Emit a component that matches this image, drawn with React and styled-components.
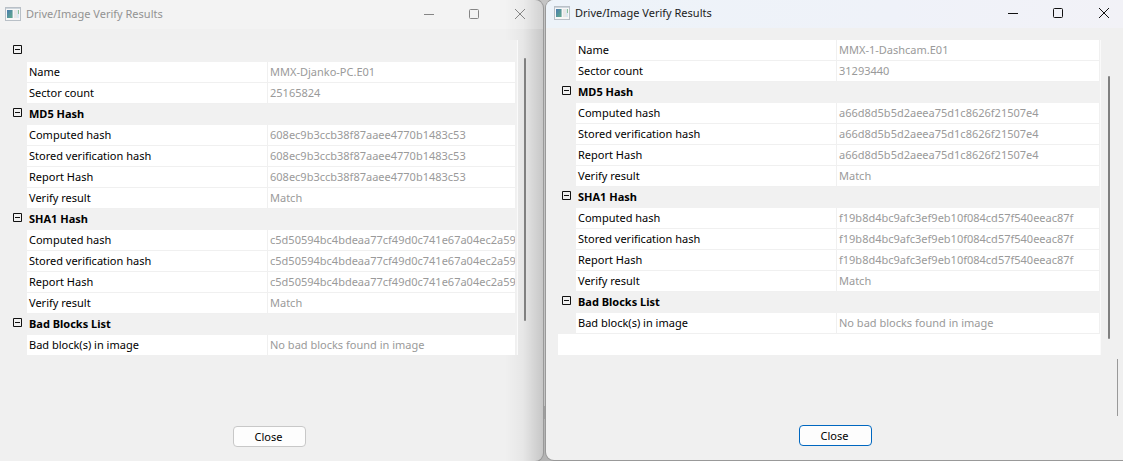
import React from 'react';
import styled, { createGlobalStyle } from 'styled-components';

const GlobalStyle = createGlobalStyle`
  * { box-sizing: border-box; }
  body {
    margin: 0;
    background: #b4b4b4;
    font-family: "Noto Sans", "Open Sans", sans-serif;
    font-size: 11px;
    overflow: hidden;
  }
`;

const Desktop = styled.main`
  display: grid;
  grid-template-columns: 543fr 577fr;
  gap: 3px;
  min-height: 100vh;
  background: linear-gradient(to bottom, #c4c4c4 0 406px, #a0a0a0 406px 419px, #b4b4b4 419px);
`;

const Dialog = styled.section`
  display: flex;
  flex-direction: column;
  min-width: 0;
  border-radius: ${p => (p.$active ? '8px 0 0 8px' : '0 8px 8px 0')};
  margin-bottom: ${p => (p.$active ? '1px' : '0')};
  background: ${p =>
    p.$active
      ? '#f0f0f0'
      : 'linear-gradient(to right, transparent calc(100% - 38px), #0000000a calc(100% - 20px), #0000002c) #f0f0f0'};
  box-shadow: 0 0 0 1px #999;
`;

const TitleBar = styled.header`
  display: flex;
  align-items: center;
  height: ${p => (p.$active ? '28px' : '29px')};
  padding: 0 ${p => (p.$active ? '13px' : '17px')} 2px ${p => (p.$active ? '8px' : '5px')};
  gap: 5px;
  border-radius: ${p => (p.$active ? '8px 0 0 0' : '0 8px 0 0')};
  background: ${p => (p.$active ? 'linear-gradient(to right, #edf3f9, #eff2f9 60%, #f2f2f7)' : '#ffffff33')};
  color: ${p => (p.$active ? '#1b1b1b' : '#929292')};
`;

const Title = styled.h1`
  flex: 1;
  margin: 0;
  font-size: 11px;
  line-height: 16px;
  font-weight: 400;
`;

const WindowControls = styled.div`
  display: flex;
  gap: 34px;
`;

const ControlButton = styled.button`
  display: flex;
  width: 12px;
  height: 12px;
  padding: 0;
  border: 0;
  background: none;
  color: ${p => (p.$active ? '#111' : '#858585')};
`;

const Content = styled.div`
  display: flex;
  align-items: flex-start;
  gap: ${p => (p.$active ? '7px' : '6px')};
  padding: ${p => (p.$active ? '12px 13px 0 12px' : '11px 17px 0 9px')};
`;

const Pane = styled.div`
  flex: 1;
  min-width: 0;
  height: 315px;
  overflow: hidden;
  background: #fff;
  border-right: 1px solid #fafafa;
`;

const Table = styled.table`
  width: 100%;
  table-layout: fixed;
  border-collapse: separate;
  border-spacing: 0;
  border-right: ${p => (p.$active ? '0' : '1px')} solid #f1f1f1;
  background: #f1f1f1;
  line-height: 16px;
`;

const GutterCol = styled.col`
  width: 18px;
`;

const NameCol = styled.col`
  width: ${p => (p.$active ? '261px' : '241px')};
`;

const Gutter = styled.td`
  padding: 0;
  background: #f0f0f0;
`;

const Cell = styled.td`
  height: 21px;
  padding: 0 2px;
  border: solid #f0f0f0;
  border-width: 0 1px 1px 0;
  background: #fff;
  color: ${p => (p.$value ? '#9a9a9a' : '#000')};
  white-space: nowrap;
  overflow: hidden;
`;

const GroupCell = styled.th`
  height: ${p => (p.$blank ? '22px' : '21px')};
  padding: 0 2px 1px;
  text-align: left;
  font-weight: 700;
  color: #000;
`;

const Toggle = styled.button`
  display: block;
  width: 9px;
  height: 9px;
  margin: 0 auto 4px 4px;
  padding: 0;
  border: 0;
  background: none;
`;

const Scrollbar = styled.div`
  width: 2px;
  height: 263px;
  margin-top: ${p => (p.$active ? '36px' : '18px')};
  border-radius: 1px;
  background: #808080;
`;

const Splitter = styled.div`
  align-self: flex-end;
  width: 1px;
  height: 57px;
  margin: 4px 5px 0 0;
  background: #999;
`;

const Footer = styled.footer`
  display: flex;
  justify-content: center;
  padding: ${p => (p.$active ? '9px 0 0 2px' : '71px 4px 0 0')};
`;

const CloseButton = styled.button`
  width: 73px;
  height: 21px;
  padding: 0 2px 0 0;
  border: 1px solid ${p => (p.$active ? '#0067c0' : '#c8c8c8')};
  border-radius: 4px;
  background: #fdfdfd;
  color: #000;
  font: 11px/16px "Noto Sans", "Open Sans", sans-serif;
`;

const WindowIcon = () => (
  <svg width="16" height="14" viewBox="0 0 16 14" aria-hidden="true">
    <defs>
      <linearGradient id="screen" x1="0" y1="0" x2="1" y2="1">
        <stop offset="0" stopColor="#4a7bb0" />
        <stop offset="1" stopColor="#5fab8b" />
      </linearGradient>
    </defs>
    <rect x="0.5" y="0.5" width="15" height="13" fill="#f7f7f7" stroke="#b9c0c7" />
    <path d="M1 1.5H15" stroke="#cdd5dc" />
    <rect x="2" y="3" width="5" height="8" fill="url(#screen)" />
    <rect x="7" y="3" width="1" height="8" fill="#9fbfc0" />
    <rect x="9" y="3" width="3" height="8" fill="#e8e8e8" />
    <rect x="12" y="3" width="2" height="8" fill="#dbe9f2" />
    <rect x="13" y="3" width="1" height="4" fill="#8cc09b" />
  </svg>
);

const controlPaths = {
  Minimize: 'M2 6.5H12',
  Maximize: 'M2.5 1.5H9.5Q10.5 1.5 10.5 2.5V9.5Q10.5 10.5 9.5 10.5H2.5Q1.5 10.5 1.5 9.5V2.5Q1.5 1.5 2.5 1.5Z',
  Close: 'M1 1L11 11M11 1L1 11',
};

const hashRows = hash => [
  ['Computed hash', hash],
  ['Stored verification hash', hash],
  ['Report Hash', hash],
  ['Verify result', 'Match'],
];

const buildGroups = ({ heading, name, sectors, md5, sha1 }) => [
  { heading, rows: [['Name', name], ['Sector count', sectors]] },
  { heading: 'MD5 Hash', rows: hashRows(md5) },
  { heading: 'SHA1 Hash', rows: hashRows(sha1) },
  { heading: 'Bad Blocks List', rows: [['Bad block(s) in image', 'No bad blocks found in image']] },
];

const images = [
  {
    heading: '',
    name: 'MMX-Djanko-PC.E01',
    sectors: '25165824',
    md5: '608ec9b3ccb38f87aaee4770b1483c53',
    sha1: 'c5d50594bc4bdeaa77cf49d0c741e67a04ec2a59',
  },
  {
    heading: null,
    name: 'MMX-1-Dashcam.E01',
    sectors: '31293440',
    md5: 'a66d8d5b5d2aeea75d1c8626f21507e4',
    sha1: 'f19b8d4bc9afc3ef9eb10f084cd57f540eeac87f',
    active: true,
  },
];

function Group({ heading, rows }) {
  return (
    <tbody>
      {heading !== null && (
        <tr>
          <Gutter>
            <Toggle aria-label={`Collapse ${heading || 'general'}`}>
              <svg width="9" height="9" viewBox="0 0 9 9" display="block">
                <path d="M0.5 0.5H8.5V8.5H0.5ZM2 4.5H7" fill="none" stroke="#111" />
              </svg>
            </Toggle>
          </Gutter>
          <GroupCell colSpan={2} $blank={!heading}>{heading}</GroupCell>
        </tr>
      )}
      {rows.map(([label, value]) => (
        <tr key={label}>
          <Gutter />
          <Cell>{label}</Cell>
          <Cell $value>{value}</Cell>
        </tr>
      ))}
    </tbody>
  );
}

function VerifyDialog({ image }) {
  const active = Boolean(image.active);
  return (
    <Dialog $active={active}>
      <TitleBar $active={active}>
        <WindowIcon />
        <Title>Drive/Image Verify Results</Title>
        <WindowControls>
          {Object.entries(controlPaths).map(([label, d]) => (
            <ControlButton key={label} aria-label={label} $active={active}>
              <svg width="12" height="12" viewBox="0 0 12 12">
                <path d={d} fill="none" stroke="currentColor" />
              </svg>
            </ControlButton>
          ))}
        </WindowControls>
      </TitleBar>
      <Content $active={active}>
        <Pane>
          <Table $active={active}>
            <colgroup>
              <GutterCol />
              <NameCol $active={active} />
              <col />
            </colgroup>
            {buildGroups(image).map((group, i) => (
              <Group key={i} {...group} />
            ))}
          </Table>
        </Pane>
        <Scrollbar $active={active} />
      </Content>
      {active && <Splitter />}
      <Footer $active={active}>
        <CloseButton $active={active}>Close</CloseButton>
      </Footer>
    </Dialog>
  );
}

export default function App() {
  return (
    <>
      <GlobalStyle />
      <Desktop>
        {images.map(image => (
          <VerifyDialog key={image.name} image={image} />
        ))}
      </Desktop>
    </>
  );
}
